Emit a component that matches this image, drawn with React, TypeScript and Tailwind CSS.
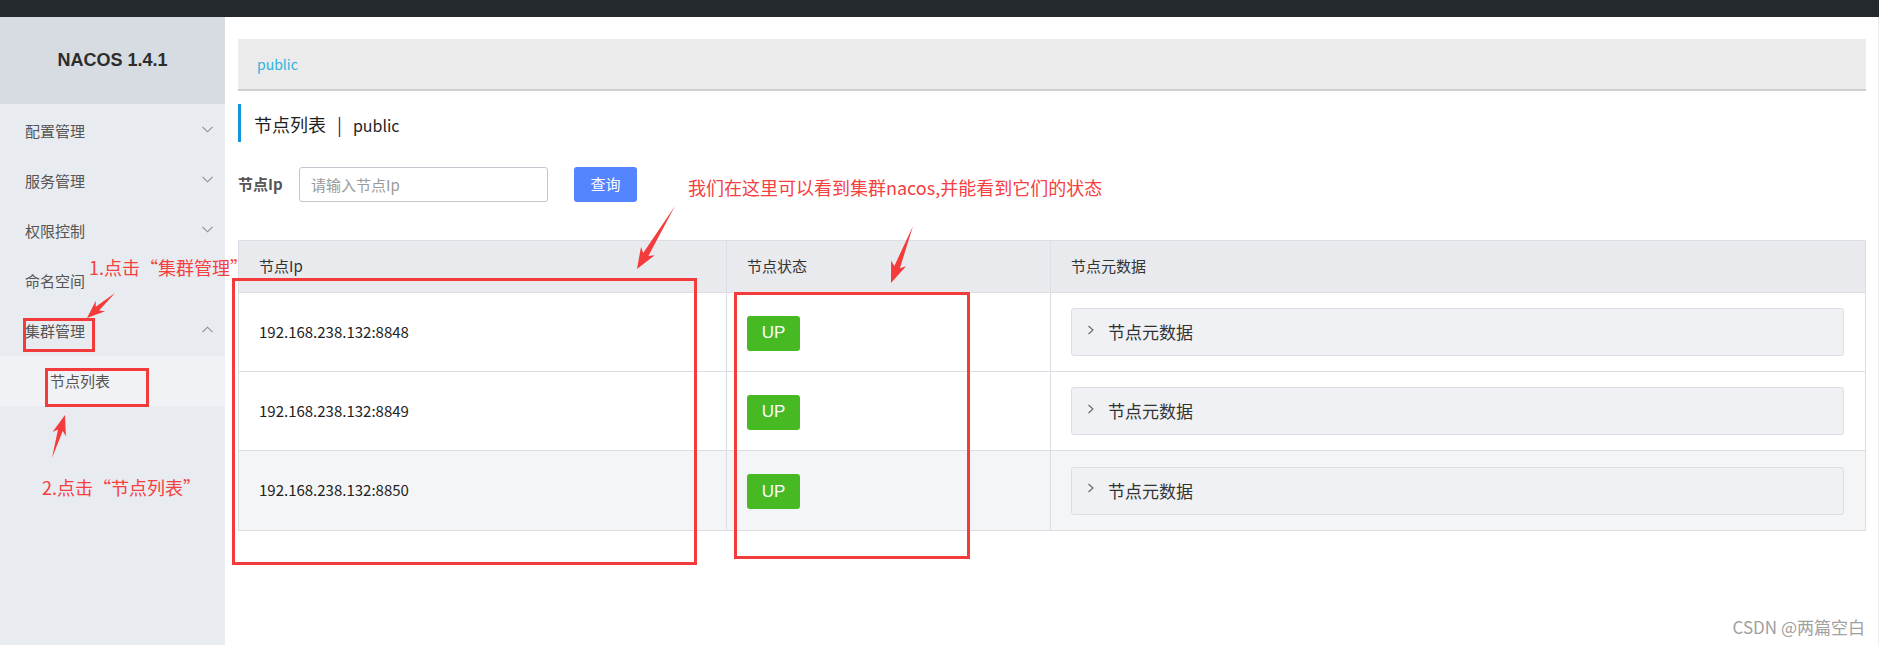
import type { ReactNode } from 'react'

const menu = [
  { label: '配置管理', arrow: 'down' },
  { label: '服务管理', arrow: 'down' },
  { label: '权限控制', arrow: 'down' },
  { label: '命名空间', arrow: '' },
  { label: '集群管理', arrow: 'up' },
]

const nodes = [
  { ip: '192.168.238.132:8848', bg: 'bg-white' },
  { ip: '192.168.238.132:8849', bg: 'bg-white' },
  { ip: '192.168.238.132:8850', bg: 'bg-[#f4f5f7]' },
]

// tapered red arrow: thin tail, swept-back head
function arrowPoints(tx: number, ty: number, px: number, py: number, hl = 15, hw = 7, sw = 2.5) {
  const dx = px - tx
  const dy = py - ty
  const len = Math.hypot(dx, dy)
  const ux = dx / len
  const uy = dy / len
  const nx = -uy
  const ny = ux
  const bx = px - ux * hl
  const by = py - uy * hl
  const pts = [
    [tx, ty],
    [bx + nx * sw, by + ny * sw],
    [bx - ux * 4 + nx * hw, by - uy * 4 + ny * hw],
    [px, py],
    [bx - ux * 4 - nx * hw, by - uy * 4 - ny * hw],
    [bx - nx * sw, by - ny * sw],
  ]
  return pts.map((p) => p.join(',')).join(' ')
}

function ChevronDown({ up = false }: { up?: boolean }) {
  return (
    <svg width="11" height="7" viewBox="0 0 11 7" className={up ? 'rotate-180' : ''}>
      <path d="M0.5 0.8 L5.5 5.8 L10.5 0.8" fill="none" stroke="#8a8f97" strokeWidth="1.1" />
    </svg>
  )
}

function Cell({ children, className = '' }: { children: ReactNode; className?: string }) {
  return <div className={`flex items-center px-[20px] ${className}`}>{children}</div>
}

export default function App() {
  return (
    <div className="relative w-[1879px] h-[645px] overflow-hidden bg-white font-['Noto_Sans_CJK_SC',sans-serif]">
      {/* top bar */}
      <div className="h-[17px] bg-[#24292e]" />

      <div className="flex h-[628px]">
        {/* Sidebar */}
        <aside className="w-[225px] shrink-0 bg-[#e8ebef]">
          <div className="h-[87px] bg-[#d7dce2] flex items-center justify-center font-['Liberation_Sans',sans-serif] font-bold text-[18px] text-[#2d2d2d]">
            NACOS 1.4.1
          </div>
          <nav className="pt-[2px]">
            {menu.map((item) => (
              <div
                key={item.label}
                className="h-[50px] flex items-center justify-between pl-[25px] pr-[12px] text-[15px] text-[#555]"
              >
                <span>{item.label}</span>
                {item.arrow && (
                  <span className="-mt-[4px]">
                    <ChevronDown up={item.arrow === 'up'} />
                  </span>
                )}
              </div>
            ))}
            <div className="h-[50px] flex items-center pl-[50px] bg-[#f0f2f5] text-[15px] text-[#555]">
              节点列表
            </div>
          </nav>
        </aside>

        {/* Main */}
        <main className="flex-1 pl-[13px] pr-[12px] pt-[22px] border-r border-[#ececec]">
          <div className="h-[52px] bg-[#ebebeb] border-b-2 border-[#cfcfcf] flex items-center pl-[19px] text-[14px] text-[#2fb3dc]">
            public
          </div>

          <div className="mt-[13px] h-[38px] border-l-[3px] border-[#1296db] pl-[13px] flex items-center text-[18px] text-[#1f1f1f]">
            <span className="mt-[3px]">节点列表</span>
            <span className="mx-[11px] mt-[3px] text-[#1d2a5c]">|</span>
            <span className="mt-[3px] text-[16px]">public</span>
          </div>

          {/* Search */}
          <div className="mt-[25px] h-[35px] flex items-center">
            <span className="w-[61px] text-[15px] font-bold text-[#555]">节点Ip</span>
            <input
              placeholder="请输入节点Ip"
              className="w-[249px] h-[35px] px-[11px] border border-[#c4c6cf] rounded-[3px] text-[15px] text-[#333] placeholder:text-[#9a9a9a] outline-none"
            />
            <button className="ml-[26px] w-[63px] h-[35px] rounded-[3px] bg-[#5584ff] text-white text-[15px]">
              查询
            </button>
          </div>

          {/* Table */}
          <div className="mt-[38px] border border-[#dcdee3]">
            <div className="grid grid-cols-[488px_324px_1fr] h-[52px] bg-[#e9eaee] text-[15px] text-[#333] border-b border-[#dcdee3]">
              <Cell className="border-r border-[#dcdee3]">节点Ip</Cell>
              <Cell className="border-r border-[#dcdee3]">节点状态</Cell>
              <Cell>节点元数据</Cell>
            </div>
            {nodes.map((n, i) => (
              <div
                key={n.ip}
                className={`grid grid-cols-[488px_324px_1fr] h-[79px] ${n.bg} ${
                  i < nodes.length - 1 ? 'border-b border-[#dcdee3]' : ''
                }`}
              >
                <Cell className="border-r border-[#dcdee3] text-[15px] text-[#222]">{n.ip}</Cell>
                <Cell className="border-r border-[#dcdee3]">
                  <span className="w-[53px] h-[35px] mt-[2px] rounded-[3px] bg-[#46b923] flex items-center justify-center text-white text-[17px] font-['Liberation_Sans',sans-serif]">
                    UP
                  </span>
                </Cell>
                <div className="flex items-center pl-[20px] pr-[21px]">
                  <div className="w-full h-[48px] border border-[#dcdee3] rounded-[3px] bg-[#f0f1f5] flex items-center pl-[15px]">
                    <svg width="8" height="10" viewBox="0 0 8 10" className="-mt-[5px]">
                      <path d="M1.5 1 L6 5 L1.5 9" fill="none" stroke="#666" strokeWidth="1.1" />
                    </svg>
                    <span className="ml-[13px] text-[17px] text-[#333]">节点元数据</span>
                  </div>
                </div>
              </div>
            ))}
          </div>
        </main>
      </div>

      {/* Annotations */}
      <div className="absolute left-[23px] top-[318px] w-[72px] h-[34px] border-[3px] border-[#f33b3b]" />
      <div className="absolute left-[45px] top-[368px] w-[104px] h-[39px] border-[3px] border-[#f33b3b]" />
      <div className="absolute left-[232px] top-[278px] w-[465px] h-[287px] border-[3px] border-[#f33b3b]" />
      <div className="absolute left-[734px] top-[292px] w-[236px] h-[267px] border-[3px] border-[#f33b3b]" />

      <div className="absolute left-[89px] top-[254px] text-[18px] leading-[26px] text-[#f5403f] whitespace-nowrap">
        1.点击“集群管理”
      </div>
      <div className="absolute left-[42px] top-[474px] text-[18px] leading-[26px] text-[#f5403f] whitespace-nowrap">
        2.点击“节点列表”
      </div>
      <div className="absolute left-[688px] top-[174px] text-[18px] leading-[26px] text-[#f5403f] whitespace-nowrap">
        我们在这里可以看到集群nacos,并能看到它们的状态
      </div>

      <svg className="absolute inset-0 pointer-events-none" width="1879" height="645">
        <polygon points={arrowPoints(115, 293, 87, 318, 14, 7, 2.5)} fill="#f33b3b" />
        <polygon points={arrowPoints(52, 458, 65, 415, 16, 7, 2.5)} fill="#f33b3b" />
        <polygon points={arrowPoints(675, 206, 637, 269, 17, 8, 3)} fill="#f33b3b" />
        <polygon points={arrowPoints(913, 226, 891, 283, 17, 8, 3)} fill="#f33b3b" />
      </svg>

      <div className="absolute right-[14px] top-[614px] text-[17px] leading-[26px] text-[#a0a0a0] whitespace-nowrap">
        CSDN @两篇空白
      </div>
    </div>
  )
}
